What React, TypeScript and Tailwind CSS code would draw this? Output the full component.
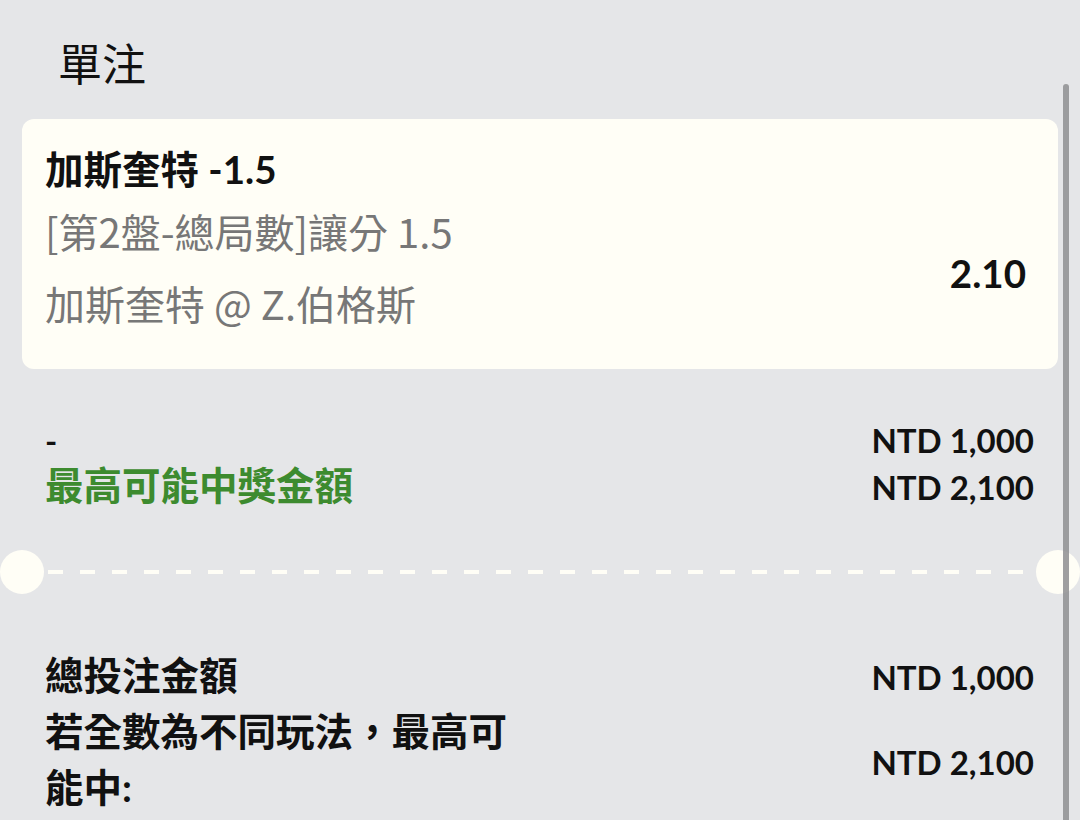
const latin = "font-['Lato','Noto_Sans_CJK_TC',sans-serif]";
const cjk = "font-['Noto_Sans_CJK_TC','Noto_Sans',sans-serif]";

function Ticket() {
  return (
    <div className="rounded-[12px] bg-[#fffef6] pl-[23px] pr-[32px] pt-[31px] pb-[46px] flex justify-between items-start">
      <div className="flex flex-col">
        <div className={`${latin} text-[38.5px] leading-[38px] font-bold text-[#111]`}>加斯奎特 -1.5</div>
        <div className={`${cjk} text-[40px] leading-[40px] text-[#777] mt-[23px]`}>[第2盤-總局數]讓分 1.5</div>
        <div className={`${cjk} text-[40px] leading-[40px] text-[#777] mt-[32px]`}>加斯奎特 @ Z.伯格斯</div>
      </div>
      <div className={`${latin} text-[38.5px] leading-[38px] font-bold text-[#111] mt-[104px]`}>2.10</div>
    </div>
  );
}

function Divider() {
  return (
    <div className="flex items-center h-[44px] -mx-[22px]">
      <div className="w-[44px] h-[44px] rounded-full bg-[#fffef6] shrink-0" />
      <div className="flex-1 h-[4px] mx-[4px] bg-[repeating-linear-gradient(90deg,#fffef6_0px,#fffef6_15px,transparent_15px,transparent_32px)]" />
      <div className="w-[44px] h-[44px] rounded-full bg-[#fffef6] shrink-0" />
    </div>
  );
}

export default function App() {
  return (
    <div className={`relative w-[1080px] h-[820px] overflow-hidden bg-[#e5e6e8] ${latin}`}>
      <div className="px-[22px]">
        <div className={`${cjk} text-[44px] leading-[44px] text-[#111] pt-[40px] pl-[36px] mb-[35px]`}>單注</div>
        <Ticket />

        <div className="pl-[23px] pr-[24px] pt-[49px] font-bold">
          <div className="flex justify-between items-baseline leading-[45px]">
            <span className="text-[33px] text-[#111]">-</span>
            <span className="text-[33px] text-[#111]">NTD 1,000</span>
          </div>
          <div className="flex justify-between items-baseline leading-[45px]">
            <span className="text-[38.5px] text-[#3d8b2f]">最高可能中獎金額</span>
            <span className="text-[33px] text-[#111]">NTD 2,100</span>
          </div>
        </div>

        <div className="mt-[40px]">
          <Divider />
        </div>

        <div className="pl-[23px] pr-[24px] pt-[53px] font-bold text-[#111]">
          <div className="flex justify-between items-center h-[56px]">
            <span className="text-[38.5px] leading-[56px]">總投注金額</span>
            <span className="text-[33px] leading-[56px] mt-[4px]">NTD 1,000</span>
          </div>
          <div className="flex justify-between items-center">
            <span className="text-[38.5px] leading-[56px] w-[480px]">若全數為不同玩法，最高可能中:</span>
            <span className="text-[33px] leading-[56px] mt-[6px]">NTD 2,100</span>
          </div>
        </div>
      </div>

      <div className="absolute left-[1063px] top-[84px] w-[6px] h-[760px] rounded-full bg-[#8e8e90]/85" />
    </div>
  );
}
